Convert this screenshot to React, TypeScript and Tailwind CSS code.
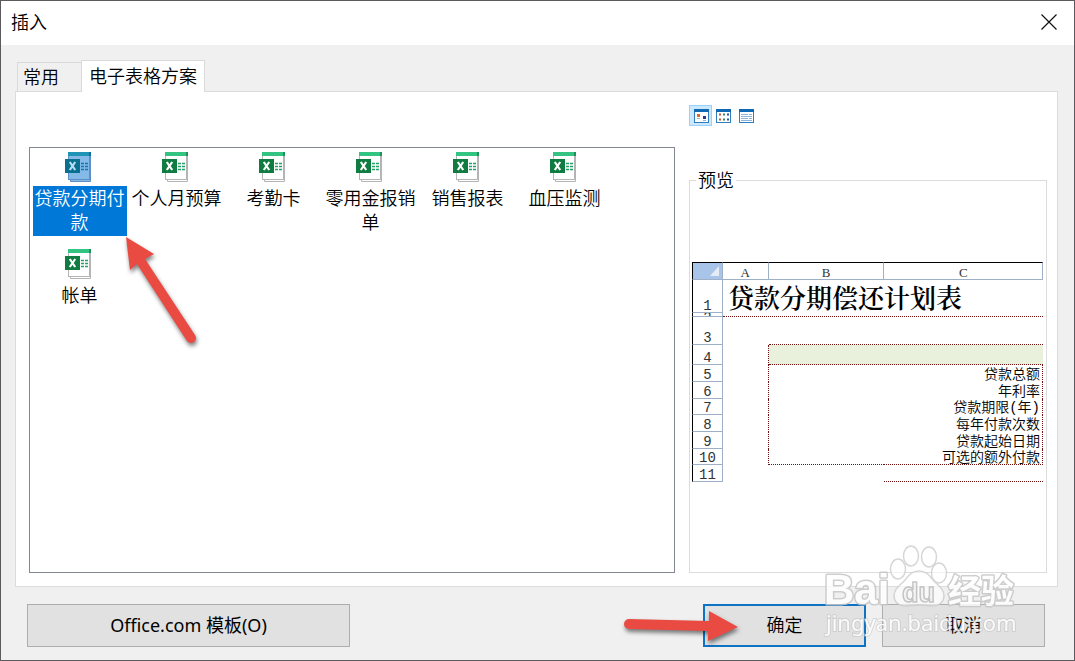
import { useState } from "react";

const templates = [
  "贷款分期付款",
  "个人月预算",
  "考勤卡",
  "零用金报销单",
  "销售报表",
  "血压监测",
  "帐单",
];

const detailRows = [
  { n: 5, label: "贷款总额", height: "h-[17px]" },
  { n: 6, label: "年利率", height: "h-[17px]" },
  { n: 7, label: "贷款期限(年)", height: "h-[16px]" },
  { n: 8, label: "每年付款次数", height: "h-[17px]" },
  { n: 9, label: "贷款起始日期", height: "h-[17px]" },
  { n: 10, label: "可选的额外付款", height: "h-[16px]" },
];

const rowHead =
  "border-r border-b border-l border-r-[#9eb0c8] border-b-[#9eb0c8] border-l-black p-0 text-center align-bottom font-['Liberation_Mono'] text-sm leading-3 font-normal text-[#333]";
const colHead =
  "border-t border-r border-b border-t-black border-r-[#9eb0c8] border-b-[#9eb0c8] p-0 text-center align-bottom font-['Liberation_Serif'] text-[13px] leading-3 font-normal text-[#333]";

function WorkbookIcon({ selected }: { selected: boolean }) {
  const page = selected ? "#84b9e8" : "#ffffff";
  const edge = selected ? "#5c8fc4" : "#b4b4b4";
  const bar = selected ? "#1e93b4" : "#33c481";
  const barEnd = selected ? "#0d6f9f" : "#1c9158";
  const box = selected ? "#0b7090" : "#107c41";
  const mark = selected ? "#b9dcf3" : "#ffffff";
  const cells = selected ? "#1478a8" : "#21a366";
  return (
    <svg className="h-8 w-8" viewBox="0 0 32 32" aria-hidden="true">
      <path d="M6.500 27v3.500h20V5" fill={page} stroke={edge} />
      <rect x="4.500" y="1.500" width="21" height="27" fill={page} stroke={edge} />
      <rect x="4" y="1" width="23" height="4" fill={bar} />
      <rect x="25" y="1" width="2" height="4" fill={barEnd} />
      <rect x="1" y="8" width="15" height="14" fill={box} />
      <path d="M5.800 11l5.400 8M11.200 11l-5.400 8" stroke={mark} strokeWidth="2.200" />
      <path d="M17 12.500h3M21 12.500h3M17 15.500h3M21 15.500h3M17 18.500h3M21 18.500h3" stroke={cells} strokeWidth="1.500" />
    </svg>
  );
}

function ViewIcon({ kind }: { kind: string }) {
  return (
    <svg className="h-[14px] w-[15px]" viewBox="0 0 15 14" aria-hidden="true">
      <rect x="0.500" y="0.500" width="14" height="13" fill="#fff" stroke="#2f7fc0" />
      <rect width="15" height="3" fill="#0f68b4" />
      {kind === "large" && (
        <>
          <rect x="3" y="5" width="3" height="3" fill="#e8622c" />
          <rect x="9" y="7" width="3" height="3" fill="#1d3f94" />
          <path d="M3 9.500h3M9 11.500h3" stroke="#8fb6d8" />
        </>
      )}
      {kind === "small" && (
        <>
          <path d="M3 5.500h2M3 10.500h2" stroke="#c0583c" strokeWidth="2" />
          <path d="M7 5.500h2M7 10.500h2" stroke="#2e8a76" strokeWidth="2" />
          <path d="M11 5.500h2M11 10.500h2" stroke="#2e4fa0" strokeWidth="2" />
        </>
      )}
      {kind === "list" && (
        <path d="M2 5.500h7M10 5.500h3M2 7.500h11M2 9.500h7M10 9.500h3M2 11.500h11" stroke="#8fb6d8" />
      )}
    </svg>
  );
}

function SheetPreview() {
  return (
    <table className="w-full table-fixed border-separate border-spacing-0">
      <colgroup>
        <col className="w-[31px]" />
        <col className="w-[13%]" />
        <col className="w-[33%]" />
        <col />
      </colgroup>
      <thead>
        <tr className="h-[18px]">
          <th className="border-t border-r border-b border-l border-t-black border-r-[#9eb0c8] border-b-[#9eb0c8] border-l-black bg-[#a9c4e9] p-0">
            <svg className="ml-auto mr-[3px] h-[10px] w-[9px]" viewBox="0 0 9 10" aria-hidden="true">
              <path d="M9 0v10H0z" fill="#e4ecf7" />
            </svg>
          </th>
          <th className={colHead}>A</th>
          <th className={colHead}>B</th>
          <th className={colHead}>C</th>
        </tr>
      </thead>
      <tbody>
        <tr className="h-[33px]">
          <th className={rowHead}>1</th>
          <td colSpan={3} className="p-0 pl-[5px] align-bottom font-['Noto_Serif_CJK_SC','Noto_Sans_CJK_SC',serif] text-[26px] leading-8 font-semibold whitespace-nowrap">
            贷款分期偿还计划表
          </td>
        </tr>
        <tr className="h-1">
          <th className={rowHead}>
            <div className="h-[3px] overflow-hidden leading-[10px]">2</div>
          </th>
          <td colSpan={3} className="border-b border-dotted border-[#701010] p-0" />
        </tr>
        <tr className="h-7">
          <th className={rowHead}>3</th>
          <td className="p-0" />
          <td colSpan={2} className="border-b border-dotted border-[#701010] p-0" />
        </tr>
        <tr className="h-5">
          <th className={rowHead}>4</th>
          <td className="border-r border-dotted border-[#701010] p-0" />
          <td colSpan={2} className="border-b border-dotted border-[#701010] bg-[#e9f0dc] p-0" />
        </tr>
        {detailRows.map((row) => (
          <tr key={row.n} className={row.height}>
            <th className={rowHead}>{row.n}</th>
            <td className="border-r border-dotted border-[#701010] p-0" />
            <td className={row.n === 10 ? "border-b border-dotted border-[#701010] p-0" : "p-0"} />
            <td
              className={
                row.n === 10
                  ? "border-r border-b border-dotted border-[#701010] p-0 pr-0.5 text-right align-bottom font-['Liberation_Mono','Noto_Sans_CJK_SC',monospace] text-sm leading-3 whitespace-nowrap"
                  : "border-r border-dotted border-[#701010] p-0 pr-0.5 text-right align-bottom font-['Liberation_Mono','Noto_Sans_CJK_SC',monospace] text-sm leading-[14px] whitespace-nowrap"
              }
            >
              {row.label}
            </td>
          </tr>
        ))}
        <tr className="h-[17px]">
          <th className={rowHead}>11</th>
          <td className="p-0" />
          <td className="p-0" />
          <td className="border-b border-dotted border-[#701010] p-0" />
        </tr>
      </tbody>
    </table>
  );
}

function Watermark() {
  return (
    <svg
      className="pointer-events-none absolute right-[54px] bottom-[20px] h-[100px] w-[200px] opacity-85"
      viewBox="820 540 200 100"
      role="img"
      aria-label="Baidu 经验"
    >
      <g fill="#fff" fillOpacity="0.75" stroke="#cfcfcf" strokeWidth="1.500" strokeLinejoin="round">
        <ellipse cx="898" cy="569" rx="7.500" ry="10" />
        <ellipse cx="911" cy="556" rx="7.500" ry="10" />
        <ellipse cx="929" cy="557" rx="7.500" ry="10" />
        <ellipse cx="939" cy="573" rx="7.500" ry="10" />
        <path d="M919 571c7 0 10 4 14 9 4 5 11 8 11 16 0 6-5 10-11 10-5 0-9-1-14-1s-9 1-14 1c-6 0-11-4-11-10 0-8 7-11 11-16 4-5 7-9 14-9z" />
      </g>
      <g fill="#fff" stroke="#c6c6c6" strokeWidth="3" paintOrder="stroke" strokeLinejoin="round">
        <text x="824" y="604" className="font-['Liberation_Sans'] text-[42px] font-bold">Bai</text>
        <text x="948" y="603" className="font-['Noto_Sans_CJK_SC'] text-[33px] font-bold">经验</text>
      </g>
      <text x="902" y="602" fill="#f4f4f4" stroke="#bdbdbd" strokeWidth="1.500" className="font-['Liberation_Sans'] text-[27px] font-bold">du</text>
      <text x="826" y="631" fill="#fff" stroke="#b8b8b8" strokeOpacity="0.5" strokeWidth="2" paintOrder="stroke" className="font-['Noto_Sans'] text-[22px] font-normal">
        jingyan.baidu.com
      </text>
    </svg>
  );
}

export default function App() {
  const [selected, setSelected] = useState(0);
  const [view, setView] = useState("large");
  return (
    <div className="relative flex min-h-screen flex-col border border-[#5c5a5c] bg-[#f0f0f0] font-['Noto_Sans','Noto_Sans_CJK_SC',sans-serif] text-lg leading-6 font-[350] text-black">
      <header className="flex h-11 items-center justify-between bg-white pr-4 pb-0.5 pl-[10px]">
        <h1>插入</h1>
        <button type="button" aria-label="关闭" className="p-px">
          <svg className="h-4 w-4" viewBox="0 0 16 16" aria-hidden="true">
            <path d="M0.500 0.500l15 15M15.500 0.500l-15 15" stroke="#111" strokeWidth="1.200" />
          </svg>
        </button>
      </header>

      <main className="flex flex-1 flex-col pt-[15px] pr-4 pl-[14px]">
        <div role="tablist" className="relative -mb-px flex h-8 items-end pl-0.5">
          <button type="button" role="tab" aria-selected="false" className="mb-px h-[29px] w-16 border-t border-l border-[#d9d9d9] pl-[5px] text-left">
            常用
          </button>
          <button type="button" role="tab" aria-selected="true" className="h-8 border border-b-0 border-[#d9d9d9] bg-white px-[7px] pb-0.5">
            电子表格方案
          </button>
        </div>

        <div role="tabpanel" className="grid flex-1 grid-cols-[646fr_358fr] gap-[14px] border border-[#dcdcdc] bg-white pr-[10px] pb-[13px] pl-[13px]">
          <ul className="mt-[55px] flex flex-wrap content-start border border-[#828790] pt-[3px] pl-px">
            {templates.map((name, i) => (
              <li key={name} className="h-[97px] w-[97px]">
                <button
                  type="button"
                  aria-pressed={selected === i}
                  onClick={() => setSelected(i)}
                  className="flex w-full flex-col items-center gap-[3px]"
                >
                  <WorkbookIcon selected={selected === i} />
                  <span className={selected === i ? "w-[94px] bg-[#0078d7] px-0.5 pb-0.5 text-white" : "w-[94px] px-0.5 pb-0.5"}>
                    {name}
                  </span>
                </button>
              </li>
            ))}
          </ul>

          <div className="flex flex-col pt-[13px]">
            <div className="flex">
              {["large", "small", "list"].map((kind) => (
                <button
                  key={kind}
                  type="button"
                  aria-label={kind}
                  aria-pressed={view === kind}
                  onClick={() => setView(kind)}
                  className={
                    view === kind
                      ? "flex h-[21px] w-[23px] items-center justify-end border border-[#99d1ff] bg-[#cce8ff] pr-0.5"
                      : "flex h-[21px] w-[23px] items-center justify-end pr-1"
                  }
                >
                  <ViewIcon kind={kind} />
                </button>
              ))}
            </div>
            <fieldset className="mt-[42px] flex-1 border border-[#dcdcdc] px-0.5">
              <legend className="ml-1 px-0.5">预览</legend>
              <div className="mt-[70px] pr-px">
                <SheetPreview />
              </div>
            </fieldset>
          </div>
        </div>
      </main>

      <footer className="flex items-center gap-4 pt-[17px] pr-[29px] pb-[13px] pl-[26px]">
        <button type="button" className="mr-auto h-[43px] w-[323px] border border-[#adadad] bg-[#e1e1e1] pb-0.5 font-normal">
          Office.com 模板(O)
        </button>
        <div className="relative">
          <button type="button" className="h-[43px] w-[163px] border-2 border-[#0f73c4] bg-[#e1e1e1] pb-0.5">
            确定
          </button>
          <svg className="pointer-events-none absolute top-0 -left-20 h-11 w-32 overflow-visible drop-shadow-[1px_3px_2px_rgba(0,0,0,0.5)]" viewBox="623 604 128 44" aria-hidden="true">
            <path d="M629 619L709 621V611L738 627L708 641V631L629 629A5 5 0 0 1 629 619Z" fill="#e94b43" />
          </svg>
        </div>
        <button type="button" className="h-[43px] w-[163px] border border-[#adadad] bg-[#e1e1e1] pb-0.5">
          取消
        </button>
      </footer>

      <svg className="pointer-events-none absolute top-[229px] left-[119px] h-[120px] w-[90px] drop-shadow-[1px_3px_2px_rgba(0,0,0,0.5)]" viewBox="120 230 90 120" aria-hidden="true">
        <path d="M126 237L154 254L145 259L195 335A5 5 0 0 1 187 341L137 264L130 270Z" fill="#e94b43" />
      </svg>
      <Watermark />
    </div>
  );
}
